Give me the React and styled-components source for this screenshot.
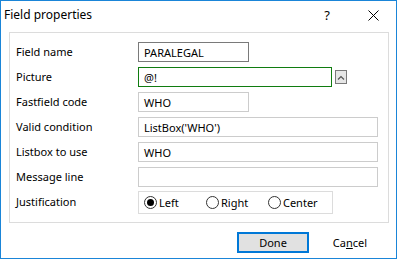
import React from 'react'
import styled, { createGlobalStyle } from 'styled-components'

const GlobalStyle = createGlobalStyle`
  html, body {
    margin: 0;
    padding: 0;
    background: #fff;
  }
  * {
    box-sizing: border-box;
  }
`

const Window = styled.div`
  width: 397px;
  height: 259px;
  border: 1px solid #1a85d8;
  background: #fff;
  font-family: 'Noto Sans', 'Open Sans', sans-serif;
  font-size: 11px;
  color: #000;
  display: flex;
  flex-direction: column;
`

const TitleBar = styled.div`
  height: 30px;
  display: flex;
  align-items: center;
  flex-shrink: 0;
`

const Title = styled.div`
  flex: 1;
  padding-left: 3px;
  font-size: 12px;
  line-height: 1;
  margin-top: -2px;
`

const CaptionButton = styled.div`
  width: 46px;
  height: 30px;
  display: flex;
  align-items: center;
  justify-content: center;
  font-size: 13px;
  margin-top: -2px;
`

const Body = styled.div`
  padding: 1px 7px 0 8px;
  display: flex;
  flex-direction: column;
`

const Panel = styled.div`
  height: 191px;
  border: 1px solid #dcdcdc;
  padding: 9px 9px 0 6px;
  display: grid;
  grid-template-columns: 122px 1fr;
  grid-auto-rows: 20px;
  row-gap: 5px;
  align-items: center;
`

const Label = styled.div`
  white-space: nowrap;
  line-height: 20px;
`

const FieldCell = styled.div`
  display: flex;
  align-items: center;
  gap: 3px;
  height: 100%;
`

const Input = styled.div`
  width: ${p => p.$width}px;
  height: ${p => p.$height || 20}px;
  border: 1px solid ${p => p.$border || '#cccccc'};
  padding: 0 5px;
  display: flex;
  align-items: center;
  white-space: nowrap;
  gap: ${p => p.$gap || 0}px;
`

const SpinButton = styled.div`
  width: 12px;
  height: 14px;
  border: 1px solid #7a7a7a;
  background: #e6e6e6;
  display: flex;
  align-items: center;
  justify-content: center;
`

const Radio = styled.div`
  display: flex;
  align-items: center;
  gap: 2px;
  width: ${p => p.$width}px;
`

const RadioCircle = styled.div`
  width: 13px;
  height: 13px;
  border-radius: 50%;
  border: 1px solid #333;
  display: flex;
  align-items: center;
  justify-content: center;

  &::after {
    content: '';
    display: ${p => (p.$checked ? 'block' : 'none')};
    width: 7px;
    height: 7px;
    border-radius: 50%;
    background: #000;
  }
`

const Footer = styled.div`
  display: flex;
  justify-content: flex-end;
  gap: 5px;
  padding: 9px 3px 0 0;
`

const Button = styled.div`
  width: 72px;
  height: 21px;
  display: flex;
  align-items: center;
  justify-content: center;
  border: 2px solid ${p => (p.$primary ? '#0078d7' : 'transparent')};
  background: ${p => (p.$primary ? '#e1e1e1' : 'transparent')};
`

const Mnemonic = styled.span`
  text-decoration: underline;
`

const rows = [
  { label: 'Field name', value: 'PARALEGAL', width: 111, border: '#7a7a7a' },
  { label: 'Picture', value: '@!', width: 194, border: '#107c10', spin: true },
  { label: 'Fastfield code', value: 'WHO', width: 111 },
  { label: 'Valid condition', value: "ListBox('WHO')", width: 240 },
  { label: 'Listbox to use', value: 'WHO', width: 240 },
  { label: 'Message line', value: '', width: 240 },
]

export default function App() {
  return (
    <>
      <GlobalStyle />
      <Window>
        <TitleBar>
          <Title>Field properties</Title>
          <CaptionButton>?</CaptionButton>
          <CaptionButton>
            <svg width="11" height="11" viewBox="0 0 11 11">
              <path d="M0.5 0.5 L10.5 10.5 M10.5 0.5 L0.5 10.5" stroke="#000" strokeWidth="1" />
            </svg>
          </CaptionButton>
        </TitleBar>
        <Body>
          <Panel>
            {rows.map(r => (
              <React.Fragment key={r.label}>
                <Label>{r.label}</Label>
                <FieldCell>
                  <Input $width={r.width} $border={r.border}>{r.value}</Input>
                  {r.spin && (
                    <SpinButton>
                      <svg width="8" height="5" viewBox="0 0 8 5">
                        <path d="M1 4.5 L4 1.5 L7 4.5" stroke="#555" strokeWidth="1.2" fill="none" />
                      </svg>
                    </SpinButton>
                  )}
                </FieldCell>
              </React.Fragment>
            ))}
            <Label>Justification</Label>
            <FieldCell>
              <Input $width={195} $height={23} $border="#dcdcdc">
                <Radio $width={63}>
                  <RadioCircle $checked />
                  Left
                </Radio>
                <Radio $width={63}>
                  <RadioCircle />
                  Right
                </Radio>
                <Radio $width={60}>
                  <RadioCircle />
                  Center
                </Radio>
              </Input>
            </FieldCell>
          </Panel>
          <Footer>
            <Button $primary>Done</Button>
            <Button>
              <span>
                Ca<Mnemonic>n</Mnemonic>cel
              </span>
            </Button>
          </Footer>
        </Body>
      </Window>
    </>
  )
}
